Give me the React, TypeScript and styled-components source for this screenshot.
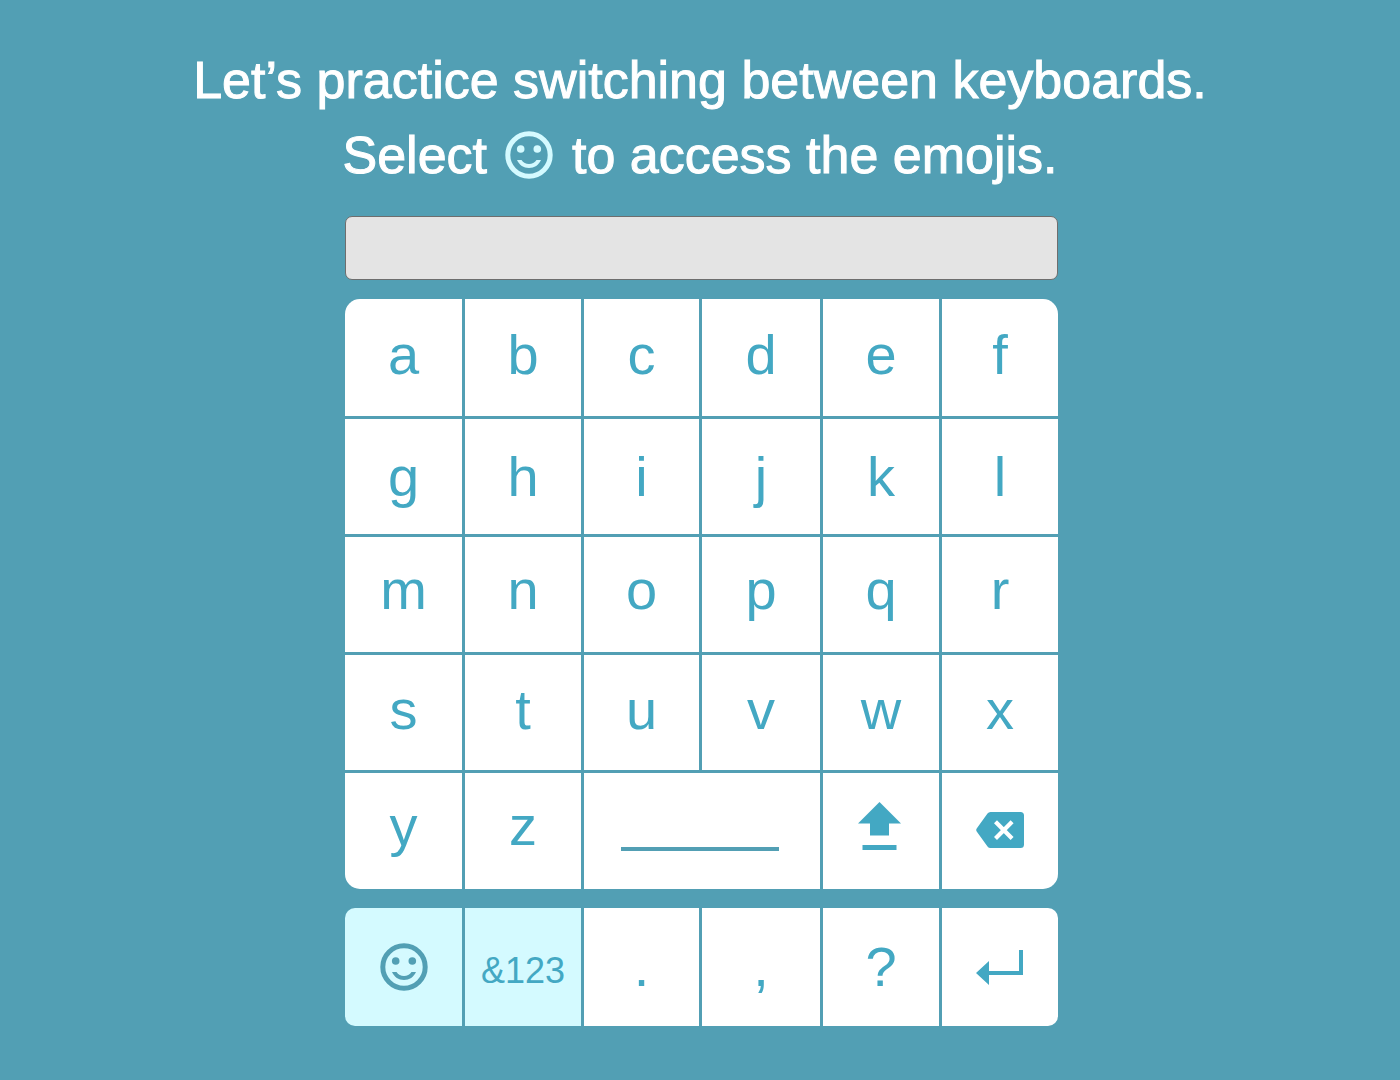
import React, { useState } from "react";
import styled, { createGlobalStyle, css } from "styled-components";

const color = {
  page: "#529fb4",
  key: "#ffffff",
  glyph: "#43a8c3",
  highlight: "#d4faff",
  field: "#e4e4e4",
  fieldBorder: "#6e6e6e",
};

const GlobalStyle = createGlobalStyle`
  *, *::before, *::after { box-sizing: border-box; }
  body {
    margin: 0;
    background: ${color.page};
    font-family: "Liberation Sans", Arial, sans-serif;
  }
`;

const Page = styled.main`
  display: flex;
  flex-direction: column;
  align-items: center;
  padding: 43px 24px 53px;
`;

const Heading = styled.h1`
  margin: 0 0 23px;
  color: #ffffff;
  font-size: 52px;
  font-weight: 400;
  line-height: 75px;
  text-align: center;
  -webkit-text-stroke: 1px #ffffff;
`;

const HeadingIcon = styled.span`
  display: inline-flex;
  margin: 0 4px;
  color: ${color.highlight};
  vertical-align: -6px;
`;

const Board = styled.div`
  display: flex;
  flex-direction: column;
  gap: 19px;
  width: 100%;
  max-width: 716px;
  padding-left: 3px;
`;

const Field = styled.input`
  display: block;
  width: 100%;
  height: 64px;
  padding: 0 16px;
  border: 1px solid ${color.fieldBorder};
  border-radius: 7px;
  background: ${color.field};
  color: ${color.glyph};
  font: inherit;
  font-size: 36px;
  outline: none;
`;

const Panel = styled.div<{ $radius: number }>`
  display: grid;
  gap: 3px;
  overflow: hidden;
  border-radius: ${(p) => p.$radius}px;
`;

const Row = styled.div<{ $height: number; $lift: number }>`
  display: grid;
  grid-template-columns: 117fr 116fr 115fr 118fr 116fr 116fr;
  gap: 3px;
  height: ${(p) => p.$height}px;
  --lift: ${(p) => p.$lift}px;
`;

type Kind = "letter" | "label" | "icon" | "space";

const Key = styled.button<{ $kind: Kind; $active?: boolean }>`
  display: flex;
  align-items: center;
  justify-content: center;
  min-width: 0;
  margin: 0;
  padding: 0;
  border: 0;
  background: ${(p) => (p.$active ? color.highlight : color.key)};
  color: ${color.glyph};
  font: inherit;
  font-size: 56px;
  line-height: 64px;
  cursor: pointer;

  ${(p) => p.$kind === "letter" && css`padding-bottom: var(--lift);`}
  ${(p) =>
    p.$kind === "label" &&
    css`
      padding-top: 8px;
      font-size: 36px;
    `}
  ${(p) =>
    p.$kind === "space" &&
    css`
      grid-column: span 2;
      align-items: flex-end;
      padding: 0 41px 38px 37px;
    `}
`;

const SpaceBar = styled.span`
  width: 100%;
  height: 4px;
  background: ${color.page};
`;

const PageTone = styled.span`
  display: flex;
  color: ${color.page};
`;

const Smiley = () => (
  <svg width="48" height="48" viewBox="0 0 48 48" fill="currentColor" aria-hidden="true">
    <circle cx="24" cy="24" r="21.2" fill="none" stroke="currentColor" strokeWidth="5" />
    <circle cx="15.7" cy="18" r="3.8" />
    <circle cx="32.3" cy="18" r="3.8" />
    <path d="M12 29C14.2 34 18.6 37 24 37S33.8 34 36 29H31.5C29.8 31.6 27 33 24 33S18.2 31.6 16.5 29Z" />
  </svg>
);

const ShiftIcon = () => (
  <svg width="46" height="58" viewBox="0 0 46 58" fill="currentColor" aria-hidden="true">
    <path d="M21.5 0L43 21.5H31V33.5H12V21.5H0Z" />
    <path d="M4.5 43H38.5V48H4.5Z" />
  </svg>
);

const BackspaceIcon = () => (
  <svg width="48" height="38" viewBox="0 0 48 38" aria-hidden="true">
    <path
      d="M14.5 0H44.5Q48 0 48 3.5V32.5Q48 36 44.5 36H14.5Q12.6 36 11.5 34.4L.7 19.4Q-.3 18 .7 16.6L11.5 1.6Q12.6 0 14.5 0Z"
      fill="currentColor"
    />
    <path d="M19.5 9.8L36.1 26.4M36.1 9.8L19.5 26.4" stroke="#ffffff" strokeWidth="4.2" />
  </svg>
);

const ReturnIcon = () => (
  <svg width="48" height="36" viewBox="0 0 48 36" fill="currentColor" aria-hidden="true">
    <path d="M0 24L13 12V22H43V1H47V26H13V36Z" />
  </svg>
);

const rows = [
  { letters: "abcdef", height: 117, lift: 6 },
  { letters: "ghijkl", height: 115, lift: 0 },
  { letters: "mnopqr", height: 115, lift: 10 },
  { letters: "stuvwx", height: 115, lift: 6 },
];

export default function App() {
  const [text, setText] = useState("");
  const type = (s: string) => setText((t) => t + s);

  const letterKey = (s: string) => (
    <Key key={s} type="button" $kind="letter" onClick={() => type(s)}>
      {s}
    </Key>
  );

  return (
    <>
      <GlobalStyle />
      <Page>
        <Heading>
          Let’s practice switching between keyboards.
          <br />
          Select{" "}
          <HeadingIcon>
            <Smiley />
          </HeadingIcon>{" "}
          to access the emojis.
        </Heading>
        <Board>
          <Field type="text" aria-label="Typed text" value={text} readOnly />
          <Panel $radius={15}>
            {rows.map((row) => (
              <Row key={row.letters} $height={row.height} $lift={row.lift}>
                {row.letters.split("").map(letterKey)}
              </Row>
            ))}
            <Row $height={116} $lift={10}>
              {["y", "z"].map(letterKey)}
              <Key type="button" $kind="space" aria-label="Space" onClick={() => type(" ")}>
                <SpaceBar />
              </Key>
              <Key type="button" $kind="icon" aria-label="Shift">
                <ShiftIcon />
              </Key>
              <Key
                type="button"
                $kind="icon"
                aria-label="Backspace"
                onClick={() => setText((t) => t.slice(0, -1))}
              >
                <BackspaceIcon />
              </Key>
            </Row>
          </Panel>
          <Panel $radius={10}>
            <Row $height={118} $lift={0}>
              <Key type="button" $kind="icon" $active aria-label="Emojis">
                <PageTone>
                  <Smiley />
                </PageTone>
              </Key>
              <Key type="button" $kind="label" $active>
                &amp;123
              </Key>
              {[".", ",", "?"].map(letterKey)}
              <Key type="button" $kind="icon" aria-label="Return">
                <ReturnIcon />
              </Key>
            </Row>
          </Panel>
        </Board>
      </Page>
    </>
  );
}
